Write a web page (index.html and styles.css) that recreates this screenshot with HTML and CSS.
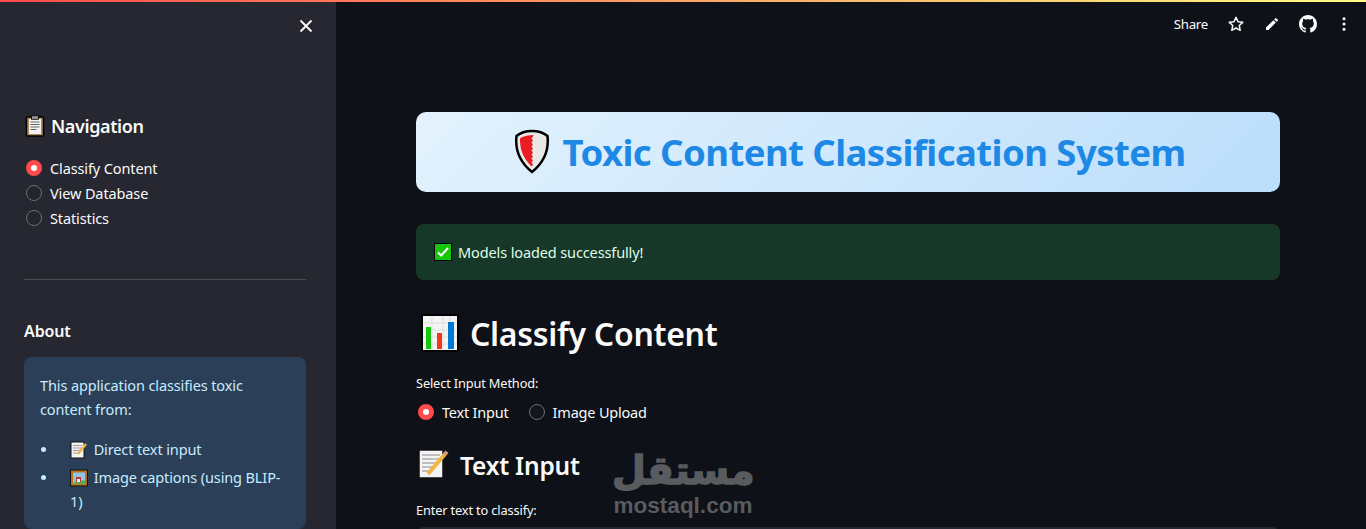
FILE: index.html
```html
<!DOCTYPE html>
<html>
<head>
  <title>Toxic Content Classification System</title>
  <link rel="stylesheet" href="styles.css">
</head>
<body>
  <div class="top-line"></div>
  <div class="app">
    <aside class="sidebar">
      <div class="close-row">
        <svg width="14" height="14" viewBox="0 0 14 14"><path d="M1.5 1.5l11 11M12.5 1.5l-11 11" stroke="#fafafa" stroke-width="1.8" fill="none"/></svg>
      </div>
      <h2 class="nav-title">
        <svg class="emoji-nav" width="20" height="22" viewBox="0 0 20 22"><rect x="1.500" y="2" width="17" height="19" rx="1" fill="#b08d57" stroke="#000" stroke-width="1.5"/><rect x="4" y="4" width="12" height="15" fill="#f2f2f2"/><rect x="6.500" y="0.800" width="7" height="3.500" fill="#999" stroke="#000" stroke-width="0.8"/><path d="M5.500 7h9M5.500 9.500h9M5.500 12h9M5.500 14.500h6" stroke="#666" stroke-width="1"/></svg>
        Navigation
      </h2>
      <div class="nav-radios">
        <div class="radio-row"><span class="radio on"></span>Classify Content</div>
        <div class="radio-row"><span class="radio"></span>View Database</div>
        <div class="radio-row"><span class="radio"></span>Statistics</div>
      </div>
      <hr class="divider">
      <h3 class="about-title">About</h3>
      <div class="about-box">
        <p>This application classifies toxic content from:</p>
        <ul>
          <li>
            <svg class="emoji-small" width="18" height="18" viewBox="0 0 18 18"><rect x="1" y="1" width="13" height="16" fill="#f4f4f4" stroke="#111" stroke-width="1"/><path d="M3 4.500h9M3 7h9M3 9.500h7M3 12h5" stroke="#999" stroke-width="1"/><path d="M8 13l8-10" stroke="#f2b544" stroke-width="2.400"/></svg>
            Direct text input
          </li>
          <li>
            <svg class="emoji-small" width="18" height="18" viewBox="0 0 18 18"><rect x="0.500" y="1" width="17" height="16" fill="#b8741a" stroke="#111" stroke-width="1"/><rect x="3" y="3.500" width="12" height="11" fill="#8fc6e8"/><path d="M3 14.500l4-3 8 0v3z" fill="#4caf50"/><rect x="6" y="8" width="5" height="5" fill="#c0392b"/><rect x="7" y="10" width="3" height="3" fill="#eee"/></svg>
            Image captions (using BLIP-1)
          </li>
        </ul>
      </div>
    </aside>

    <main class="main">
      <header class="toolbar">
        <span class="share">Share</span>
        <svg width="18" height="18" viewBox="0 0 24 24"><path d="M12 3.200l2.700 5.800 6.300.8-4.600 4.300 1.200 6.300L12 17.300l-5.600 3.100 1.200-6.300L3 9.800l6.300-.8z" fill="none" stroke="#fafafa" stroke-width="2" stroke-linejoin="round"/></svg>
        <svg width="16" height="16" viewBox="0 0 24 24"><path d="M3 17.300V21h3.700L17.800 9.900l-3.700-3.700zM20.700 7a1 1 0 000-1.400l-2.300-2.300a1 1 0 00-1.400 0l-1.800 1.800 3.700 3.700z" fill="#fafafa"/></svg>
        <svg width="18" height="18" viewBox="0 0 16 16"><path d="M8 0C3.580 0 0 3.580 0 8c0 3.540 2.290 6.530 5.470 7.590.4.070.55-.17.55-.38 0-.19-.01-.82-.01-1.490-2.010.37-2.530-.49-2.690-.94-.09-.23-.48-.94-.82-1.130-.28-.15-.68-.52-.01-.53.63-.01 1.080.58 1.230.82.72 1.210 1.870.87 2.330.66.070-.52.280-.87.510-1.070-1.780-.2-3.640-.89-3.640-3.950 0-.87.310-1.590.820-2.150-.08-.2-.36-1.020.08-2.120 0 0 .67-.21 2.200.82.640-.18 1.320-.27 2-.27s1.360.09 2 .27c1.530-1.040 2.200-.82 2.200-.82.440 1.100.16 1.920.08 2.120.51.560.82 1.270.82 2.150 0 3.070-1.870 3.750-3.650 3.950.29.250.54.730.54 1.480 0 1.070-.01 1.930-.01 2.200 0 .21.150.46.550.38A8.010 8.010 0 0016 8c0-4.420-3.580-8-8-8z" fill="#fafafa"/></svg>
        <svg width="16" height="16" viewBox="0 0 16 16"><circle cx="8" cy="2.800" r="1.500" fill="#fafafa"/><circle cx="8" cy="8" r="1.500" fill="#fafafa"/><circle cx="8" cy="13.200" r="1.500" fill="#fafafa"/></svg>
      </header>

      <div class="content">
        <div class="banner">
          <svg width="36" height="46" viewBox="0 0 36 46"><path d="M18 2c6 0 12 2 15.500 5 1 9-.5 24-15.500 36C3 31 1.500 16 2.500 7 6 4 12 2 18 2z" fill="#e8e8e8" stroke="#000" stroke-width="2.500"/><path d="M19.500 6c-4.500 0-9.500 1-13.500 3.300C5.800 17 7.500 28 17.500 37.500l1.500-2-1.500-2 1.500-2-1.500-2 1.500-2-1.500-2 1.500-2-1.500-2 1.500-2-1.500-2 1.500-2-1.500-2 1.500-2-1.500-2 1.500-2z" fill="#ec1c24"/></svg>
          <h1>Toxic Content Classification System</h1>
        </div>

        <div class="success">
          <svg width="18" height="18" viewBox="0 0 18 18"><rect x="0.500" y="0.500" width="17" height="17" fill="#16c60c" stroke="#000" stroke-width="1"/><path d="M4 9.500l3.200 3L14 5" stroke="#fff" stroke-width="2" fill="none"/></svg>
          Models loaded successfully!
        </div>

        <h2 class="section-title">
          <svg width="40" height="40" viewBox="0 0 40 40"><rect x="1" y="1" width="38" height="38" fill="#000"/><rect x="3" y="3" width="34" height="34" fill="#f4f4f4"/><path d="M3 10h34M3 17h34M3 24h34M3 31h34M12 3v34M23 3v34M30 3v34" stroke="#ddd" stroke-width="1"/><rect x="6" y="14" width="5" height="22" fill="#16c60c"/><rect x="17" y="20" width="5" height="16" fill="#f03a17"/><rect x="28" y="9" width="6" height="27" fill="#0078d4"/></svg>
          Classify Content
        </h2>

        <div class="field-label">Select Input Method:</div>
        <div class="method-radios">
          <div class="radio-row"><span class="radio on"></span>Text Input</div>
          <div class="radio-row"><span class="radio"></span>Image Upload</div>
        </div>

        <h3 class="sub-title">
          <svg width="32" height="32" viewBox="0 0 32 32"><rect x="1" y="1" width="24" height="28" fill="#f4f4f4" stroke="#111" stroke-width="1.500"/><path d="M4 6h18M4 10h18M4 14h15M4 18h10M4 22h7" stroke="#888" stroke-width="1.200"/><path d="M10 25L27 5" stroke="#f2b544" stroke-width="4"/><path d="M27 5l2-2.300" stroke="#d98" stroke-width="4"/></svg>
          Text Input
        </h3>

        <div class="field-label">Enter text to classify:</div>
        <div class="textarea"></div>
      </div>

      <div class="watermark">
        <div class="wm-ar">مستقل</div>
        <div class="wm-en">mostaql.com</div>
      </div>
    </main>
  </div>
</body>
</html>
```
FILE: styles.css
```css
* {
  box-sizing: border-box;
}
html, body {
  margin: 0;
  height: 100%;
  overflow: hidden;
}
body {
  background-color: #0e1117;
  color: #fafafa;
  font-family: "Noto Sans", sans-serif;
  font-size: 14.5px;
  letter-spacing: -0.12px;
}
.top-line {
  height: 2px;
  background: linear-gradient(90deg, #ff4b4b, #fffd80);
}
.app {
  display: flex;
  height: 527px;
}
.sidebar {
  width: 336px;
  flex-shrink: 0;
  background-color: #262730;
  padding: 0 30px 0 24px;
  overflow: hidden;
}
.close-row {
  display: flex;
  justify-content: flex-end;
  margin-right: -7px;
  padding: 17px 0 0;
  height: 31px;
}
.nav-title {
  display: flex;
  align-items: center;
  gap: 6px;
  margin: 79px 0 0;
  font-size: 18px;
  font-weight: 600;
  letter-spacing: -0.4px;
  line-height: 28px;
}
.emoji-nav {
  margin-left: 1px;
}
.nav-radios {
  margin-top: 18px;
  display: flex;
  flex-direction: column;
  gap: 5px;
}
.radio-row {
  display: flex;
  align-items: center;
  gap: 8px;
  height: 20px;
}
.radio {
  width: 16px;
  height: 16px;
  margin-left: 2px;
  border-radius: 50%;
  border: 1px solid #6c6d75;
  background-color: #23252c;
}
.method-radios .radio {
  background-color: #14161d;
}
.radio.on,
.method-radios .radio.on {
  border: 5px solid #ff4b4b;
  background-color: #fff;
}
.divider {
  margin: 51px 0 0;
  border: none;
  border-top: 1px solid #4a4b53;
}
.about-title {
  margin: 40px 0 0;
  font-size: 16px;
  font-weight: 600;
  line-height: 22px;
}
.about-box {
  margin-top: 15px;
  padding: 16px;
  height: 172px;
  background-color: #2b4058;
  border-radius: 8px;
  color: #c7ebff;
  line-height: 24px;
}
.about-box p {
  margin: 0 0 16px;
}
.about-box ul {
  margin: 0;
  padding-left: 30px;
  list-style: none;
}
.about-box li {
  position: relative;
  margin-bottom: 4px;
}
/* bullet sits far left of the text */
.about-box li::before {
  content: "";
  position: absolute;
  left: -29px;
  top: 10px;
  width: 5px;
  height: 5px;
  border-radius: 50%;
  background-color: #c7ebff;
}
.emoji-small {
  vertical-align: -4px;
  margin-right: 2px;
}
.main {
  flex: 1;
  position: relative;
  overflow: hidden;
}
.toolbar {
  display: flex;
  justify-content: flex-end;
  align-items: center;
  gap: 19px;
  height: 44px;
  padding-right: 14px;
}
.share {
  font-size: 13.3px;
  letter-spacing: -0.3px;
}
.content {
  width: 864px;
  margin-left: 80px;
  padding-top: 66px;
}
.banner {
  display: flex;
  justify-content: center;
  align-items: center;
  gap: 12px;
  height: 80px;
  padding-left: 4px;
  border-radius: 10px;
  background: linear-gradient(135deg, #e3f2fd, #bbdefb);
}
.banner h1 {
  margin: 0;
  font-size: 36.5px;
  font-weight: 700;
  letter-spacing: -0.55px;
  color: #1e88e5;
}
.success {
  display: flex;
  align-items: center;
  gap: 6px;
  height: 56px;
  margin-top: 32px;
  padding-left: 18px;
  border-radius: 8px;
  background-color: #173828;
  color: #dffde9;
}
.section-title {
  display: flex;
  align-items: center;
  gap: 10px;
  margin: 33px 0 0;
  padding-left: 4px;
  height: 40px;
  font-size: 32px;
  font-weight: 600;
  letter-spacing: -0.3px;
}
.field-label {
  font-size: 12.8px;
  letter-spacing: -0.15px;
  line-height: 18px;
}
.section-title + .field-label {
  margin-top: 21px;
}
.method-radios {
  display: flex;
  gap: 18px;
  margin-top: 10px;
  letter-spacing: -0.2px;
}
.sub-title {
  display: flex;
  align-items: center;
  gap: 10px;
  margin: 27px 0 0;
  padding-left: 2px;
  height: 32px;
  font-size: 24.5px;
  font-weight: 600;
  letter-spacing: -0.2px;
}
.sub-title + .field-label {
  margin-top: 20px;
}
.textarea {
  height: 60px;
  margin-top: 8px;
  border-radius: 8px;
  background-color: #262730;
}
.watermark {
  position: absolute;
  left: 276px;
  top: 446px;
  width: 142px;
  color: #5a5b5f;
  text-align: center;
  letter-spacing: 0;
}
.wm-ar {
  font-family: "DejaVu Sans", sans-serif;
  font-weight: 700;
  font-size: 39px;
  line-height: 46px;
  -webkit-text-stroke: 1.5px #5a5b5f;
}
.wm-en {
  font-family: "Liberation Sans", sans-serif;
  font-weight: 700;
  font-size: 22.5px;
  line-height: 24px;
}
```
